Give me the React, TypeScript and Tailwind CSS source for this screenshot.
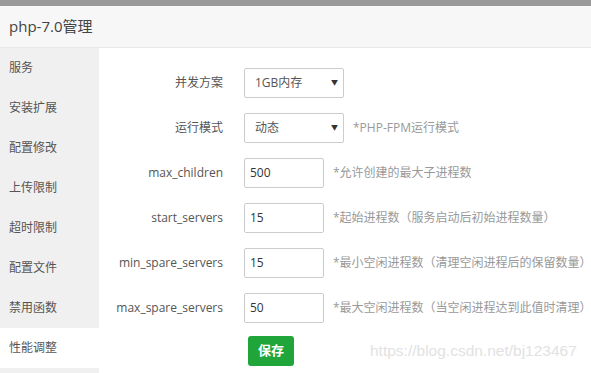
const font = "font-['Open_Sans','Noto_Sans_CJK_SC',sans-serif]"

const menu = ['服务', '安装扩展', '配置修改', '上传限制', '超时限制', '配置文件', '禁用函数', '性能调整']

const rows = [
  { label: 'max_children', value: '500', help: '*允许创建的最大子进程数' },
  { label: 'start_servers', value: '15', help: '*起始进程数（服务启动后初始进程数量）' },
  { label: 'min_spare_servers', value: '15', help: '*最小空闲进程数（清理空闲进程后的保留数量）' },
  { label: 'max_spare_servers', value: '50', help: '*最大空闲进程数（当空闲进程达到此值时清理）' },
]

function Select({ value }: { value: string }) {
  return (
    <div className="w-[100px] h-[30px] border border-[#ccc] rounded-[2px] flex items-center justify-between pl-[10px] pr-[5px] text-[12px] text-[#555]">
      <span>{value}</span>
      <span className="text-[7px] text-[#333]">▼</span>
    </div>
  )
}

export default function App() {
  return (
    <div className={`w-[591px] h-[373px] overflow-hidden bg-white ${font}`}>
      <div className="h-[6px] bg-[#9a9a9a]" />
      <div className="h-[42px] bg-[#f7f7f7] border-b border-[#e8e8e8] flex items-center pl-[9px] text-[15px] text-[#444]">
        php-7.0管理
      </div>
      <div className="flex h-[325px]">
        <div className="w-[99px] bg-[#f0f0f0] shrink-0">
          {menu.map((m, i) => (
            <div
              key={m}
              className={`h-[40px] flex items-center pl-[9px] text-[12px] text-[#555] ${i === 7 ? 'bg-white' : ''}`}
            >
              {m}
            </div>
          ))}
        </div>
        <div className="flex-1 pt-[20px] text-[12px]">
          <div className="flex items-center h-[30px] mb-[15px]">
            <div className="w-[124px] text-right text-[#555]">并发方案</div>
            <div className="ml-[21px]"><Select value="1GB内存" /></div>
          </div>
          <div className="flex items-center h-[30px] mb-[15px]">
            <div className="w-[124px] text-right text-[#555]">运行模式</div>
            <div className="ml-[21px]"><Select value="动态" /></div>
            <div className="ml-[9px] text-[#999]">*PHP-FPM运行模式</div>
          </div>
          {rows.map((r) => (
            <div key={r.label} className="flex items-center h-[30px] mb-[15px]">
              <div className="w-[124px] text-right text-[#555]">{r.label}</div>
              <div className="ml-[21px] w-[80px] h-[30px] border border-[#ccc] rounded-[2px] flex items-center pl-[5px] text-[#333]">
                {r.value}
              </div>
              <div className="ml-[9px] text-[#999] whitespace-nowrap">{r.help}</div>
            </div>
          ))}
          <div className="flex items-end -mt-[2px]">
            <button className="ml-[149px] w-[46px] h-[30px] rounded-[3px] bg-[#20a53a] text-white text-[13px] font-semibold">
              保存
            </button>
            <div className="ml-[76px] mb-[4px] text-[15.5px] text-[#e2e2e2] font-['Liberation_Sans',sans-serif] whitespace-nowrap">
              https://blog.csdn.net/bj123467
            </div>
          </div>
        </div>
      </div>
    </div>
  )
}
